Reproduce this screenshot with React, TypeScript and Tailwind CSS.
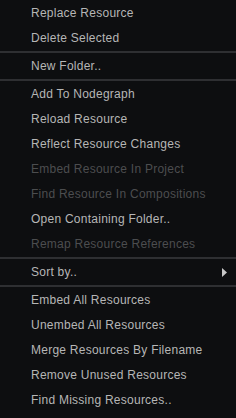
type Item = { label: string; disabled?: boolean; submenu?: boolean };

const groups: Item[][] = [
  [{ label: 'Replace Resource' }, { label: 'Delete Selected' }],
  [{ label: 'New Folder..' }],
  [
    { label: 'Add To Nodegraph' },
    { label: 'Reload Resource' },
    { label: 'Reflect Resource Changes' },
    { label: 'Embed Resource In Project', disabled: true },
    { label: 'Find Resource In Compositions', disabled: true },
    { label: 'Open Containing Folder..' },
    { label: 'Remap Resource References', disabled: true },
  ],
  [{ label: 'Sort by..', submenu: true }],
  [
    { label: 'Embed All Resources' },
    { label: 'Unembed All Resources' },
    { label: 'Merge Resources By Filename' },
    { label: 'Remove Unused Resources' },
    { label: 'Find Missing Resources..' },
  ],
];

function MenuRow({ item }: { item: Item }) {
  const color = item.disabled ? 'text-[#4c4d4f]' : 'text-[#b6b6b6]';
  return (
    <div className={`flex h-[25px] items-center justify-between pl-[31px] pr-[9px] pt-[1px] ${color}`}>
      <span className="text-[12px] leading-[24px] tracking-[0.25px]">{item.label}</span>
      {item.submenu && (
        <svg width="5" height="9" viewBox="0 0 5 9">
          <path d="M0 0 L5 4.5 L0 9 Z" fill="#c8c8c8" />
        </svg>
      )}
    </div>
  );
}

export default function App() {
  return (
    <div
      className="h-[418px] w-[236px] overflow-hidden bg-[#0d0e10]"
      style={{ fontFamily: '"Liberation Sans", Arial, sans-serif' }}
    >
      {groups.map((group, gi) => (
        <div key={gi}>
          {gi > 0 && <div className="mt-[1px] h-[2px] bg-[#2e2f32]" />}
          {group.map((item) => (
            <MenuRow key={item.label} item={item} />
          ))}
        </div>
      ))}
    </div>
  );
}
